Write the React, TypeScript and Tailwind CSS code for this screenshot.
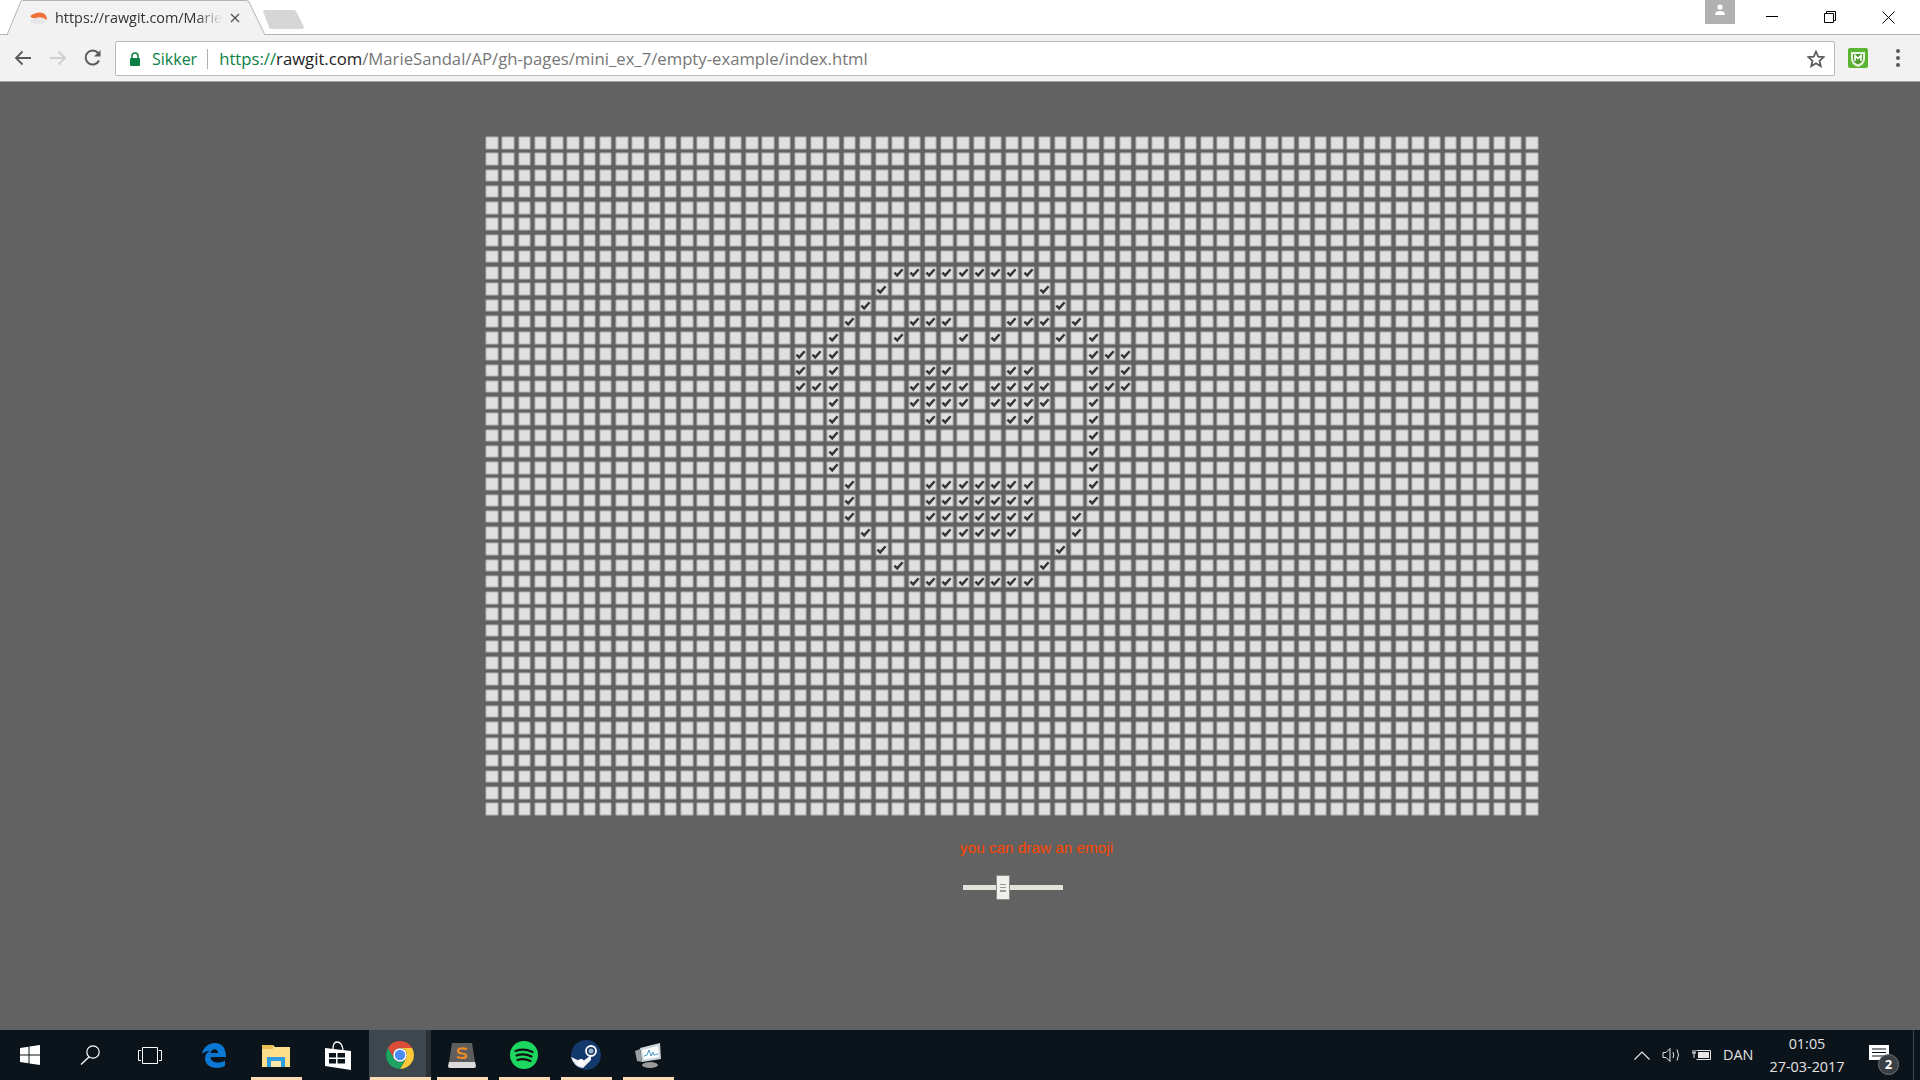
import React from 'react';

const COLS = 65;
const ROWS = 42;

// checked columns per row, the drawn emoji
const checked: Record<number, number[]> = {
  8: [25, 26, 27, 28, 29, 30, 31, 32, 33],
  9: [24, 34],
  10: [23, 35],
  11: [22, 26, 27, 28, 32, 33, 34, 36],
  12: [21, 25, 29, 31, 35, 37],
  13: [19, 20, 21, 37, 38, 39],
  14: [19, 21, 27, 28, 32, 33, 37, 39],
  15: [19, 20, 21, 26, 27, 28, 29, 31, 32, 33, 34, 37, 38, 39],
  16: [21, 26, 27, 28, 29, 31, 32, 33, 34, 37],
  17: [21, 27, 28, 32, 33, 37],
  18: [21, 37],
  19: [21, 37],
  20: [21, 37],
  21: [22, 27, 28, 29, 30, 31, 32, 33, 37],
  22: [22, 27, 28, 29, 30, 31, 32, 33, 37],
  23: [22, 27, 28, 29, 30, 31, 32, 33, 36],
  24: [23, 28, 29, 30, 31, 32, 36],
  25: [24, 35],
  26: [25, 34],
  27: [26, 27, 28, 29, 30, 31, 32, 33],
};

const Box: React.FC<{ on: boolean }> = ({ on }) => (
  <div className="w-[13.5px] h-[13.5px] rounded-[2px] border border-[#8c8c8c] bg-[#e0e0e0] shadow-[inset_0_0_0_1px_#c8c8c8] flex items-center justify-center">
    {on && (
      <svg width="11" height="11" viewBox="0 0 11 11" className="shrink-0">
        <path d="M1.4 5.6 L4.2 8.4 L9.6 2.2" fill="none" stroke="#363636" strokeWidth="2.4" />
      </svg>
    )}
  </div>
);

const BoxGrid: React.FC = () => {
  const boxes = [];
  for (let r = 0; r < ROWS; r++) {
    for (let c = 0; c < COLS; c++) {
      boxes.push(<Box key={r + '-' + c} on={!!checked[r] && checked[r].includes(c)} />);
    }
  }
  return (
    <div className="ml-[485px] w-[1054px] grid grid-cols-[repeat(65,13.5px)] auto-rows-[13.5px] gap-[2.75px]">
      {boxes}
    </div>
  );
};

const Tabstrip: React.FC = () => (
  <div className="h-[35px] bg-white flex border-b border-[#b4b4b4] relative">
    <div className="relative ml-[7px] w-[258px] h-[36px] z-10">
      <svg className="absolute inset-0" width="258" height="36" viewBox="0 0 258 36">
        <path d="M0 35 L14 1 Q15 0.5 17 0.5 L239 0.5 Q241 0.5 242 2 L258 35" fill="#f2f2f2" stroke="#b4b4b4" />
      </svg>
      <div className="relative flex items-center h-[35px] pl-[22px]">
        <svg width="20" height="14" viewBox="0 0 20 14">
          <ellipse cx="9" cy="10" rx="8" ry="3" fill="#e8e8e8" />
          <path d="M1 5 Q8 0 14 2 Q18 4 18 9 Q12 5 7 7 Q3 8 1 5Z" fill="#f0703c" />
        </svg>
        <span className="ml-[6px] w-[167px] whitespace-nowrap text-[14.4px] text-[#333] [mask-image:linear-gradient(to_right,black_85%,transparent)] [font-family:'Open_Sans','Liberation_Sans',sans-serif]">https://rawgit.com/Marie</span>
        <svg className="ml-[8px]" width="10" height="10" viewBox="0 0 10 10">
          <path d="M1 1 L9 9 M9 1 L1 9" stroke="#555" strokeWidth="1.4" />
        </svg>
      </div>
    </div>
    <svg className="mt-[9px] ml-[-3px]" width="44" height="21" viewBox="0 0 44 21">
      <path d="M1 2 Q1 1 3 1 L31 1 Q33 1 34 2 L42 18 Q42 20 40 20 L9 20 Q7 20 7 18Z" fill="#d6d6d6" />
    </svg>
    <div className="ml-auto flex h-[34px] mr-[3px]">
      <div className="mr-[8px] w-[30px] h-[24px] bg-[#b1b1b1] flex justify-center pt-[4px]">
        <svg width="12" height="12" viewBox="0 0 12 12">
          <circle cx="6" cy="3" r="2.6" fill="#fff" />
          <path d="M1 11 Q1 7 6 7 Q11 7 11 11Z" fill="#fff" />
        </svg>
      </div>
      <div className="w-[58px] flex justify-center items-start pt-[16px]">
        <div className="w-[12px] h-px bg-black" />
      </div>
      <div className="w-[58px] flex justify-center items-start pt-[11px]">
        <svg width="12" height="12" viewBox="0 0 12 12">
          <path d="M0.5 2.5H9.5V11.5H0.5Z M2.5 2.5V0.5H11.5V9.5H9.5" fill="none" stroke="#000" />
        </svg>
      </div>
      <div className="w-[58px] flex justify-center items-start pt-[11px]">
        <svg width="13" height="13" viewBox="0 0 13 13">
          <path d="M0.5 0.5 L12.5 12.5 M12.5 0.5 L0.5 12.5" stroke="#000" />
        </svg>
      </div>
    </div>
  </div>
);

const Toolbar: React.FC = () => (
  <div className="h-[47px] bg-[#f2f2f2] border-b border-[#a0a0a0] flex items-center">
    <svg className="ml-[14px]" width="18" height="16" viewBox="0 0 18 16">
      <path d="M17 8H2 M8.5 1.5 L2 8 L8.5 14.5" fill="none" stroke="#5a5a5a" strokeWidth="1.8" />
    </svg>
    <svg className="ml-[17px]" width="18" height="16" viewBox="0 0 18 16">
      <path d="M1 8H16 M9.5 1.5 L16 8 L9.5 14.5" fill="none" stroke="#cfcfcf" strokeWidth="1.8" />
    </svg>
    <svg className="ml-[17px]" width="18" height="18" viewBox="0 0 18 18">
      <path d="M15 11.5 A7 7 0 1 1 14 4" fill="none" stroke="#5a5a5a" strokeWidth="2" />
      <path d="M16.5 1 V7.5 H10Z" fill="#5a5a5a" />
    </svg>
    <div className="ml-[13px] w-[1720px] h-[35px] bg-white border border-[#b9b9b9] rounded-[2px] flex items-center pl-[13px] pt-[1px] text-[16.7px] whitespace-nowrap [font-family:'Open_Sans','Liberation_Sans',sans-serif]">
      <svg width="12" height="14" viewBox="0 0 12 14">
        <path d="M3 6V4 A3 3 0 0 1 9 4V6" fill="none" stroke="#0b8043" strokeWidth="1.5" />
        <rect x="1" y="6" width="10" height="8" rx="1" fill="#0b8043" />
      </svg>
      <span className="ml-[11px] text-[#0b8043] text-[16px]">Sikker</span>
      <div className="ml-[10px] w-px h-[20px] bg-[#b0b0b0]" />
      <span className="ml-[11px] text-[#0b8043]">https://</span>
      <span className="text-[#222]">rawgit.com</span>
      <span className="text-[#777]">/MarieSandal/AP/gh-pages/mini_ex_7/empty-example/index.html</span>
      <svg className="ml-auto mr-[9px]" width="18" height="18" viewBox="0 0 18 18">
        <path d="M9 1.5 L11.2 6.6 L16.7 7.1 L12.5 10.8 L13.8 16.2 L9 13.3 L4.2 16.2 L5.5 10.8 L1.3 7.1 L6.8 6.6Z" fill="none" stroke="#5a5a5a" strokeWidth="1.7" />
      </svg>
    </div>
    <svg className="ml-[13px]" width="20" height="20" viewBox="0 0 20 20">
      <rect width="20" height="20" rx="2" fill="#5cb531" />
      <path d="M3 4 H17 V11 Q17 16 10 19 Q3 16 3 11Z" fill="#e8f2e0" />
      <path d="M5 6 H15 V11 Q15 14 10 16.5 Q5 14 5 11Z" fill="#4c9a2a" />
      <path d="M7 13 V7.5 L10 10.5 L13 7.5 V13" fill="none" stroke="#fff" strokeWidth="1.6" />
    </svg>
    <div className="ml-[28px] flex flex-col gap-[3px]">
      <div className="w-[4px] h-[4px] rounded-full bg-[#5a5a5a]" />
      <div className="w-[4px] h-[4px] rounded-full bg-[#5a5a5a]" />
      <div className="w-[4px] h-[4px] rounded-full bg-[#5a5a5a]" />
    </div>
  </div>
);

const Page: React.FC = () => (
  <div className="flex-1 bg-[#626262] pt-[54px]">
    <BoxGrid />
    <div className="ml-[960px] mt-[23.5px] text-[15.3px] leading-[18px] text-[#ff4500] [font-family:'Liberation_Sans',Arial,sans-serif]">you can draw an emoji</div>
    <div className="ml-[963px] mt-[18px] w-[100px] h-[25px] flex items-center relative">
      <div className="w-full h-[5px] bg-[#e4e0da]" />
      <div className="absolute left-[33px] top-0 w-[14px] h-[25px] bg-[#f1efec] border border-[#8a8a86] flex flex-col items-center justify-center gap-[2px]">
        <div className="w-[6px] h-px bg-[#999]" />
        <div className="w-[6px] h-px bg-[#999]" />
        <div className="w-[6px] h-[2px] bg-[#999]" />
      </div>
    </div>
  </div>
);

const TaskItem: React.FC<{ open?: boolean; children: React.ReactNode }> = ({ open, children }) => (
  <div className="relative w-[62px] h-full flex items-center justify-center">
    {children}
    {open && <div className="absolute bottom-0 left-[6px] right-[5px] h-[3px] bg-[#fddbb4]" />}
  </div>
);

const Taskbar: React.FC = () => (
  <div className="h-[50px] bg-[#0b141a] flex items-center text-[#e2e2e2] [font-family:'Open_Sans','Liberation_Sans',sans-serif]">
    <div className="w-[60px] h-full flex items-center justify-center">
      <svg width="20" height="20" viewBox="0 0 20 20">
        <path d="M0 3 L8.5 1.8 V9.5 H0Z M9.5 1.6 L20 0 V9.5 H9.5Z M0 10.5 H8.5 V18.2 L0 17Z M9.5 10.5 H20 V20 L9.5 18.4Z" fill="#fff" />
      </svg>
    </div>
    <div className="w-[60px] h-full flex items-center justify-center">
      <svg width="20" height="20" viewBox="0 0 20 20">
        <circle cx="13" cy="7" r="6.2" fill="none" stroke="#fff" strokeWidth="1.2" />
        <path d="M9 12 L1 19.5" stroke="#fff" strokeWidth="1.3" />
      </svg>
    </div>
    <div className="w-[63px] h-full flex items-center justify-start pl-[18px]">
      <svg width="24" height="17" viewBox="0 0 24 17">
        <path d="M4.5 0.5H19.5V16.5H4.5Z M3 3.5H0.5V13.5H3 M21 3.5H23.5V13.5H21" fill="none" stroke="#fff" />
      </svg>
    </div>
    <TaskItem>
      <svg width="24" height="25" viewBox="0 0 24 25">
        <path d="M0 11 C1 4 7 0 13 0 C20 0 24 5 24 14 H8.5 C9 20 17 21 23 17.5 V23 C15 27 3 25 3 15 C3 12 5 9 8 7.5 C5 8 2 9 0 11Z M8.5 10 H16 C16 5 9.5 5 8.5 10Z" fill="#0a78d4" fillRule="evenodd" />
      </svg>
    </TaskItem>
    <TaskItem open>
      <svg width="28" height="23" viewBox="0 0 28 23">
        <path d="M0 1 H11 L13 3 H28 V23 H0Z" fill="#fbdf8a" />
        <path d="M0 1 H11 V5 H0Z" fill="#e9bf52" />
        <path d="M5 13 H23 V23 H19 V17 H9 V23 H5Z" fill="#2d9fe0" />
        <path d="M9 17 H19 V23 H9Z" fill="#fbe8a8" />
      </svg>
    </TaskItem>
    <TaskItem>
      <svg width="26" height="29" viewBox="0 0 26 29">
        <path d="M8 8 Q8 1 12 1 Q17 1 18 9" fill="none" stroke="#fff" strokeWidth="1.3" />
        <path d="M0 7 L26 10 V29 L0 25Z" fill="#fff" />
        <path d="M4 12 H11 V16.5 H4Z M12.5 12 H20 V16.5 H12.5Z M4 18 H11 V22.5 H4Z M12.5 18 H20 V22.5 H12.5Z" fill="#0b141a" />
      </svg>
    </TaskItem>
    <div className="relative w-[62px] h-full flex bg-[#2a3238]">
      <div className="w-[57px] h-full bg-[#3e474d] flex items-center justify-center pl-[5px]">
        <svg width="28" height="28" viewBox="0 0 28 28">
          <path d="M14 0 A14 14 0 0 1 26.12 7 H14 A7 7 0 0 0 7.94 17.5 L1.88 7 A14 14 0 0 1 14 0Z" fill="#dd4b39" />
          <path d="M26.12 7 A14 14 0 0 1 14 28 L20.06 17.5 A7 7 0 0 0 14 7Z" fill="#fdc936" />
          <path d="M1.88 7 A14 14 0 0 0 14 28 L20.06 17.5 A7 7 0 0 1 7.94 17.5Z" fill="#1da462" />
          <circle cx="14" cy="14" r="6.8" fill="#fff" />
          <circle cx="14" cy="14" r="5.2" fill="#4c8bf5" />
        </svg>
      </div>
      <div className="absolute bottom-0 left-[1px] right-0 h-[3px] bg-[#fddbb4]" />
    </div>
    <TaskItem open>
      <svg width="28" height="25" viewBox="0 0 28 25">
        <path d="M4 0 H24 L27 19 H1Z" fill="#5e5e5e" />
        <path d="M1 19 H27 L28 23 Q28 25 26 25 H2 Q0 25 0 23Z" fill="#dcdcdc" />
        <path d="M19 6 Q10 4 10 8 Q10 10 14 10.5 Q19 11 18 14 Q15 16 9 14" fill="none" stroke="#f08a24" strokeWidth="2.2" />
      </svg>
    </TaskItem>
    <TaskItem open>
      <svg width="28" height="28" viewBox="0 0 28 28">
        <circle cx="14" cy="14" r="14" fill="#1ed760" />
        <path d="M5.5 10 Q14 7 22.5 11 M6.5 14.5 Q14 12 21.5 15.5 M7.5 19 Q14 17 20.5 20" fill="none" stroke="#111" strokeWidth="2.2" strokeLinecap="round" />
      </svg>
    </TaskItem>
    <TaskItem open>
      <svg width="30" height="30" viewBox="0 0 30 30">
        <circle cx="15" cy="15" r="15" fill="#14396b" />
        <path d="M0 17 L11 22 L20 15 L20 20 L12 28 Q3 27 0 17Z" fill="#f2f5f8" />
        <circle cx="20" cy="11" r="5" fill="none" stroke="#fff" strokeWidth="1.8" />
        <circle cx="20" cy="11" r="2.5" fill="#9ab2c8" />
        <circle cx="10" cy="22" r="3" fill="#fff" />
      </svg>
    </TaskItem>
    <TaskItem open>
      <svg width="26" height="25" viewBox="0 0 26 25">
        <path d="M5 5 L25 0 L26 16 L7 19Z" fill="#cfd6da" />
        <path d="M7 7 L23 3 L24 14 L9 16.5Z" fill="#fdfdfd" />
        <path d="M9 13 L12 12 L14 7 L16 13 L18 9 L19 12 L23 11" fill="none" stroke="#4a9acb" strokeWidth="1" />
        <path d="M0 8 L5 6 L7 19 L2 18Z" fill="#9a9fa2" />
        <ellipse cx="15" cy="22" rx="8" ry="3" fill="#9a9a9a" />
      </svg>
    </TaskItem>
    <div className="ml-auto flex items-center h-full relative">
      <svg className="mr-[12px]" width="16" height="9" viewBox="0 0 16 9">
        <path d="M0.5 8.5 L8 1 L15.5 8.5" fill="none" stroke="#e6e6e6" strokeWidth="1.2" />
      </svg>
      <svg className="mr-[10px]" width="20" height="16" viewBox="0 0 20 16">
        <path d="M1 5.5H4L8 1.5V14.5L4 10.5H1Z M11 5 Q12.5 8 11 11 M15 2.5 Q18 8 15 13.5" fill="none" stroke="#e6e6e6" />
      </svg>
      <svg className="mr-[11px]" width="20" height="12" viewBox="0 0 20 12">
        <path d="M4.5 1.5H18.5V10.5H4.5" fill="none" stroke="#e6e6e6" />
        <rect x="6" y="3" width="11" height="6" fill="#e6e6e6" />
        <path d="M0 4H4 M1 1V4 M3 1V4 M2 4V9" stroke="#e6e6e6" />
      </svg>
      <span className="w-[32px] text-[14.4px]">DAN</span>
      <div className="ml-[14px] w-[76px] text-center text-[14.4px] leading-[23px] whitespace-nowrap">
        <div>01:05</div>
        <div>27-03-2017</div>
      </div>
      <div className="ml-[24px] w-[45px] h-full relative border-r border-[#3a444a]">
        <svg className="absolute left-[0px] top-[15px]" width="20" height="18" viewBox="0 0 20 18">
          <path d="M0 0H20V15H0Z" fill="#fff" />
          <path d="M3 4H17M3 7.5H17M3 11H17" stroke="#0b141a" />
        </svg>
        <div className="absolute left-[9px] top-[24px] w-[21px] h-[21px] rounded-full bg-[#3a3f43] border border-[#777] flex items-center justify-center text-[13px] font-bold text-white">2</div>
      </div>
      <div className="w-[6px]" />
    </div>
  </div>
);

export default function App() {
  return (
    <div className="w-[1920px] h-[1080px] flex flex-col overflow-hidden">
      <Tabstrip />
      <Toolbar />
      <Page />
      <Taskbar />
    </div>
  );
}
